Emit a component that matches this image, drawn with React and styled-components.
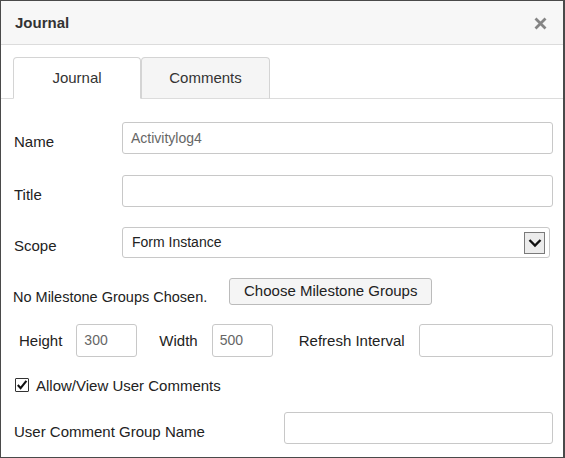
import React from 'react';
import styled, { createGlobalStyle } from 'styled-components';

const GlobalStyle = createGlobalStyle`
  html, body {
    margin: 0;
    padding: 0;
    background: #fff;
  }
  * {
    box-sizing: border-box;
  }
`;

function App() {
  return (
    <>
      <GlobalStyle />
      <Dialog>
        <Header>
          <HeaderTitle>Journal</HeaderTitle>
          <CloseButton aria-label="Close">
            <svg width="13" height="13" viewBox="0 0 13 13">
              <path d="M1.5 1.5 L11.5 11.5 M11.5 1.5 L1.5 11.5" stroke="#858585" strokeWidth="2.8" strokeLinecap="butt" />
            </svg>
          </CloseButton>
        </Header>

        <TabBar>
          <Tab active>Journal</Tab>
          <Tab>Comments</Tab>
        </TabBar>

        <Form>
          <Row height={32}>
            <Label width={108}>Name</Label>
            <TextInput>
              <Value muted>Activitylog4</Value>
            </TextInput>
          </Row>

          <Row height={32} gap={21}>
            <Label width={108}>Title</Label>
            <TextInput />
          </Row>

          <Row height={31} gap={20}>
            <Label width={108}>Scope</Label>
            <Select>
              <Value>Form Instance</Value>
              <SelectArrow>
                <svg width="14" height="10" viewBox="0 0 14 10">
                  <path d="M1.5 2 L7 7.5 L12.5 2" fill="none" stroke="#111" strokeWidth="2.4" />
                </svg>
              </SelectArrow>
            </Select>
          </Row>

          <Row height={27} gap={20}>
            <MilestoneText>No Milestone Groups Chosen.</MilestoneText>
            <Button>Choose Milestone Groups</Button>
          </Row>

          <Row height={33} gap={19}>
            <SizeLabel left={5}>Height</SizeLabel>
            <SmallInput>
              <Value muted>300</Value>
            </SmallInput>
            <SizeLabel left={22}>Width</SizeLabel>
            <SmallInput>
              <Value muted>500</Value>
            </SmallInput>
            <SizeLabel left={26}>Refresh Interval</SizeLabel>
            <TextInput />
          </Row>

          <CheckRow>
            <CheckBox>
              <svg width="12" height="12" viewBox="0 0 12 12">
                <path d="M1.8 6 L4.6 9.2 L10.4 1.8" fill="none" stroke="#111" strokeWidth="2.1" />
              </svg>
            </CheckBox>
            <CheckLabel>Allow/View User Comments</CheckLabel>
          </CheckRow>

          <Row height={32} gap={20}>
            <Label width={270}>User Comment Group Name</Label>
            <TextInput />
          </Row>
        </Form>
      </Dialog>
    </>
  );
}

const Dialog = styled.div`
  width: 565px;
  height: 458px;
  border: 1px solid #4a4a4a;
  border-right-width: 2px;
  background: #fff;
  font-family: 'Liberation Sans', Arial, sans-serif;
  color: #222;
  display: flex;
  flex-direction: column;
`;

const Header = styled.div`
  height: 44px;
  flex-shrink: 0;
  background: #f7f7f7;
  border-bottom: 1px solid #dcdcdc;
  display: flex;
  align-items: center;
  justify-content: space-between;
  padding: 0 16px 0 14px;
`;

const HeaderTitle = styled.div`
  font-size: 15px;
  font-weight: bold;
  color: #333;
  margin-top: -1px;
`;

const CloseButton = styled.div`
  width: 13px;
  height: 13px;
  display: flex;
  margin-top: 1px;
`;

const TabBar = styled.div`
  display: flex;
  margin-top: 12px;
  padding-left: 12px;
  border-bottom: 1px solid #dcdcdc;
  height: 42px;
  flex-shrink: 0;
`;

const Tab = styled.div`
  height: 42px;
  width: ${(p) => (p.active ? '128px' : '129px')};
  margin-bottom: -1px;
  border: 1px solid #d4d4d4;
  border-bottom: ${(p) => (p.active ? '1px solid #fff' : '1px solid #dcdcdc')};
  border-radius: 4px 4px 0 0;
  background: ${(p) => (p.active ? '#fff' : '#f5f5f5')};
  font-size: 15px;
  color: #333;
  display: flex;
  align-items: center;
  justify-content: center;
  padding-bottom: 1px;
`;

const Form = styled.div`
  padding: 23px 10px 0 13px;
  display: flex;
  flex-direction: column;
`;

const Row = styled.div`
  display: flex;
  align-items: center;
  height: ${(p) => p.height}px;
  margin-top: ${(p) => p.gap || 0}px;
`;

const Label = styled.div`
  width: ${(p) => p.width}px;
  flex-shrink: 0;
  font-size: 15px;
  color: #222;
  padding-top: 6px;
`;

const TextInput = styled.div`
  flex: 1;
  height: 100%;
  border: 1px solid #c8c8c8;
  border-radius: 3px;
  background: #fff;
  display: flex;
  align-items: center;
  padding: 0 8px;
`;

const Value = styled.span`
  font-size: 14px;
  color: ${(p) => (p.muted ? '#666' : '#222')};
  margin-top: -1px;
`;

const Select = styled.div`
  width: 428px;
  height: 100%;
  border: 1px solid #c8c8c8;
  border-radius: 3px;
  display: flex;
  align-items: center;
  justify-content: space-between;
  padding: 0 4px 0 9px;
`;

const SelectArrow = styled.div`
  width: 21px;
  height: 22px;
  border: 1px solid #7a7a7a;
  background: #ececec;
  display: flex;
  align-items: center;
  justify-content: center;
`;

const MilestoneText = styled.div`
  font-size: 14.5px;
  color: #222;
  margin-left: -1px;
  margin-right: 22px;
  padding-top: 10px;
`;

const Button = styled.div`
  width: 203px;
  height: 100%;
  border: 1px solid #bbb;
  border-radius: 3px;
  background: #f5f5f5;
  font-size: 15px;
  color: #222;
  display: flex;
  align-items: center;
  justify-content: center;
  padding-bottom: 2px;
`;

const SizeLabel = styled.div`
  font-size: 15px;
  color: #222;
  padding-left: ${(p) => p.left}px;
  padding-right: 14px;
  flex-shrink: 0;
`;

const SmallInput = styled(TextInput)`
  flex: 0 0 61px;
  padding: 0 7px;
`;

const CheckRow = styled.div`
  display: flex;
  align-items: center;
  margin-top: 21px;
  height: 14px;
`;

const CheckBox = styled.div`
  width: 14px;
  height: 14px;
  margin-left: 1px;
  border: 1px solid #333;
  border-radius: 1px;
  background: #fff;
  display: flex;
  align-items: center;
  justify-content: center;
`;

const CheckLabel = styled.div`
  font-size: 15px;
  color: #222;
  margin-left: 7px;
`;

export default App;
